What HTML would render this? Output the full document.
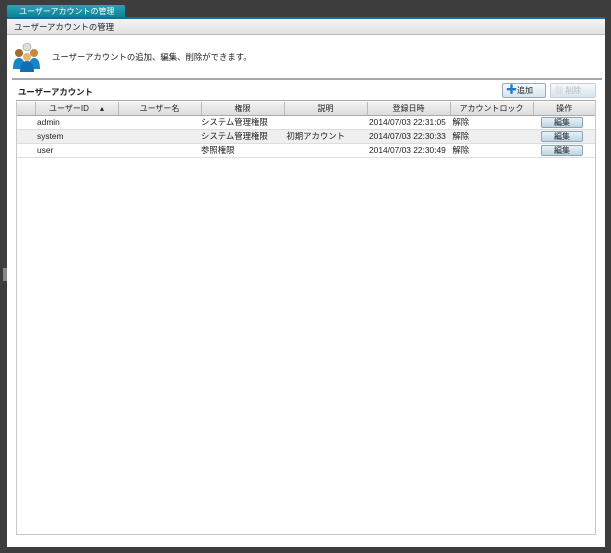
<!DOCTYPE html>
<html><head><meta charset="utf-8"><style>
*{margin:0;padding:0;box-sizing:border-box}
body{width:611px;height:553px;background:#3d3d3d;position:relative;overflow:hidden;font-family:"Liberation Sans","Noto Sans CJK JP",sans-serif;font-size:8.4px;color:#222}
.a{position:absolute}
.tab{left:7px;top:5px;width:118px;height:13px;background:linear-gradient(#2aa3b5,#0d7f93);color:#fff;font-size:8px;line-height:13px;padding-left:12px;border-radius:2px 2px 0 0;white-space:nowrap}
.blue{left:7px;top:17px;width:598px;height:2px;background:#1a6aa0}
.panel{left:7px;top:19px;width:598px;height:528px;background:#fff}
.hdr{left:7px;top:19px;width:598px;height:16px;background:linear-gradient(#f4f4f4,#e2e2e2);border-bottom:1px solid #bbb;line-height:16px;padding-left:7px}
.sep{left:12px;top:78px;width:590px;height:2px;background:#a8a8a8}
.box{left:16px;top:100px;width:580px;height:435px;border:1px solid #c8c8c8;border-top:1px solid #aaa}
table{border-collapse:collapse;position:absolute;left:17px;top:102px;width:578px;table-layout:fixed}
th{height:13px;background:linear-gradient(#f2f2f2,#dcdcdc);font-weight:normal;border-right:1px solid #bbb;border-bottom:1px solid #aaa;font-size:8px}
td{height:14px;border-bottom:1px solid #ddd;font-size:8.4px;white-space:nowrap;overflow:hidden}
tr.g td{background:#efefef}
.btn{display:inline-block;width:42px;height:11px;border:1px solid #8aa6b8;border-radius:2px;background:linear-gradient(#e8f2f8,#bfd4e2);text-align:center;line-height:9px;font-size:8px}
.tb{top:83px;height:15px;border:1px solid #9ab;border-radius:2px;background:linear-gradient(#f6fafc,#d6e4ee);font-size:8px;line-height:13px;white-space:nowrap}
</style></head><body>
<div class="a tab">ユーザーアカウントの管理</div>
<div class="a blue"></div>
<div class="a panel"></div>
<div class="a" style="left:3px;top:268px;width:4px;height:13px;background:#888"></div>
<div class="a hdr">ユーザーアカウントの管理</div>
<svg class="a" style="left:12px;top:42px" width="30" height="30" viewBox="0 0 30 30">
<circle cx="15" cy="5" r="4" fill="#ddd" stroke="#999" stroke-width=".6"/>
<circle cx="7" cy="11" r="4" fill="#a36a2c"/><circle cx="22" cy="11" r="4" fill="#c8883e"/>
<path d="M1 27 Q1 16 7 16 Q13 16 13 27Z" fill="#1686c9"/>
<path d="M17 27 Q17 16 22 16 Q28 16 28 27Z" fill="#1686c9"/>
<circle cx="15" cy="15" r="4" fill="#e6b275"/>
<path d="M8 30 Q8 19 15 19 Q22 19 22 30Z" fill="#0f6fb5"/>
</svg>
<div class="a" style="left:52px;top:51px">ユーザーアカウントの追加、編集、削除ができます。</div>
<div class="a sep"></div>
<div class="a" style="left:18px;top:86px;font-weight:bold;font-size:8.4px">ユーザーアカウント</div>
<div class="a tb" style="left:502px;width:44px;padding-left:3px"><span style="color:#1a7ad0;font-weight:bold;font-size:11px">✚</span>追加</div>
<div class="a tb" style="left:550px;width:46px;padding-left:4px;color:#bbb;border-color:#ccd">▥ 削除</div>
<div class="a box"></div>
<table>
<colgroup><col style="width:18px"><col style="width:83px"><col style="width:83px"><col style="width:83px"><col style="width:83px"><col style="width:83px"><col style="width:83px"><col></colgroup>
<tr><th></th><th>ユーザーID &nbsp; &nbsp; ▴</th><th>ユーザー名</th><th>権限</th><th>説明</th><th>登録日時</th><th>アカウントロック</th><th style="border-right:none">操作</th></tr>
<tr><td></td><td style="padding-left:2px">admin</td><td></td><td>システム管理権限</td><td></td><td style="padding-left:2px">2014/07/03 22:31:05</td><td>&nbsp;解除</td><td style="padding-left:8px"><span class="btn">編集</span></td></tr>
<tr class="g"><td></td><td style="padding-left:2px">system</td><td></td><td>システム管理権限</td><td>&nbsp;初期アカウント</td><td style="padding-left:2px">2014/07/03 22:30:33</td><td>&nbsp;解除</td><td style="padding-left:8px"><span class="btn">編集</span></td></tr>
<tr><td></td><td style="padding-left:2px">user</td><td></td><td>参照権限</td><td></td><td style="padding-left:2px">2014/07/03 22:30:49</td><td>&nbsp;解除</td><td style="padding-left:8px"><span class="btn">編集</span></td></tr>
</table>
</body></html>
